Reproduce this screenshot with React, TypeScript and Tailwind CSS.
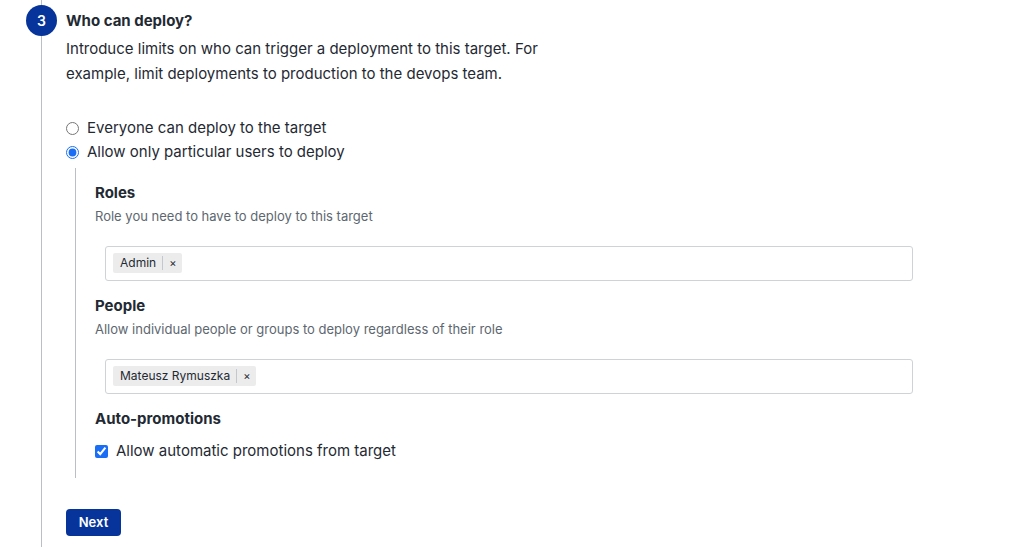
import React from "react";

function Tag({ label }: { label: string }) {
  return (
    <div className="flex items-center h-[20px] bg-[#ececec] rounded-[2px] text-[12px] text-[#1f2a33]">
      <span className="pl-[7px] pr-[6px]">{label}</span>
      <span className="w-px h-[14px] bg-[#c4c8cc]" />
      <span className="px-[6px] text-[11px] leading-none">×</span>
    </div>
  );
}

function TagInput({ label }: { label: string }) {
  return (
    <div className="ml-[10px] w-[808px] h-[35px] border border-[#cfd3d6] rounded-[3px] flex items-center pl-[7px]">
      <Tag label={label} />
    </div>
  );
}

export default function App() {
  return (
    <div
      className="w-full h-[547px] bg-white overflow-hidden flex text-[#1f2a33]"
      style={{ fontFamily: "Inter, 'Noto Sans', sans-serif" }}
    >
      <div className="ml-[26px] w-[31px] flex flex-col items-center shrink-0">
        <div className="w-px h-[5px] bg-[#b9bfc4]" />
        <div className="w-[31px] h-[31px] rounded-full bg-[#07349a] text-white flex items-center justify-center text-[14px] font-semibold">
          3
        </div>
        <div className="w-px flex-1 bg-[#b9bfc4]" />
      </div>
      <div className="ml-[9px] pt-[5px] flex flex-col">
        <div className="h-[31px] leading-[31px] text-[15px] font-bold">Who can deploy?</div>
        <p className="text-[15px] leading-[25px] w-[490px] -mt-[0.5px]">
          Introduce limits on who can trigger a deployment to this target. For example, limit deployments to production to the devops team.
        </p>
        <div className="mt-[31px] flex flex-col text-[15px]">
          <label className="flex items-center h-[24px]">
            <input type="radio" name="who" className="m-0 w-[13px] h-[13px] accent-[#1a6ef5]" />
            <span className="ml-[8px]">Everyone can deploy to the target</span>
          </label>
          <label className="flex items-center h-[24px]">
            <input type="radio" name="who" defaultChecked className="m-0 w-[13px] h-[13px] accent-[#1a6ef5]" />
            <span className="ml-[8px]">Allow only particular users to deploy</span>
          </label>
        </div>
        <div className="mt-[3px] ml-[9px] border-l border-[#b9bfc4] pl-[19px] pt-[14px] pb-[14px] flex flex-col">
          <div className="h-[22px] leading-[22px] text-[15px] font-bold">Roles</div>
          <div className="mt-[2px] h-[20px] leading-[20px] text-[13px] text-[#5d6770]">
            Role you need to have to deploy to this target
          </div>
          <div className="mt-[20px]">
            <TagInput label="Admin" />
          </div>
          <div className="mt-[14px] h-[22px] leading-[22px] text-[15px] font-bold">People</div>
          <div className="mt-[2px] h-[20px] leading-[20px] text-[13px] text-[#5d6770]">
            Allow individual people or groups to deploy regardless of their role
          </div>
          <div className="mt-[20px]">
            <TagInput label="Mateusz Rymuszka" />
          </div>
          <div className="mt-[14px] h-[22px] leading-[22px] text-[15px] font-bold">Auto-promotions</div>
          <label className="mt-[10px] flex items-center h-[24px] text-[15px]">
            <input type="checkbox" defaultChecked className="m-0 w-[13px] h-[13px] accent-[#1a6ef5]" />
            <span className="ml-[8px]">Allow automatic promotions from target</span>
          </label>
        </div>
        <div className="mt-[31px]">
          <button className="h-[27px] w-[55px] rounded-[4px] bg-[#07349a] text-white text-[13px] font-semibold">
            Next
          </button>
        </div>
      </div>
    </div>
  );
}
